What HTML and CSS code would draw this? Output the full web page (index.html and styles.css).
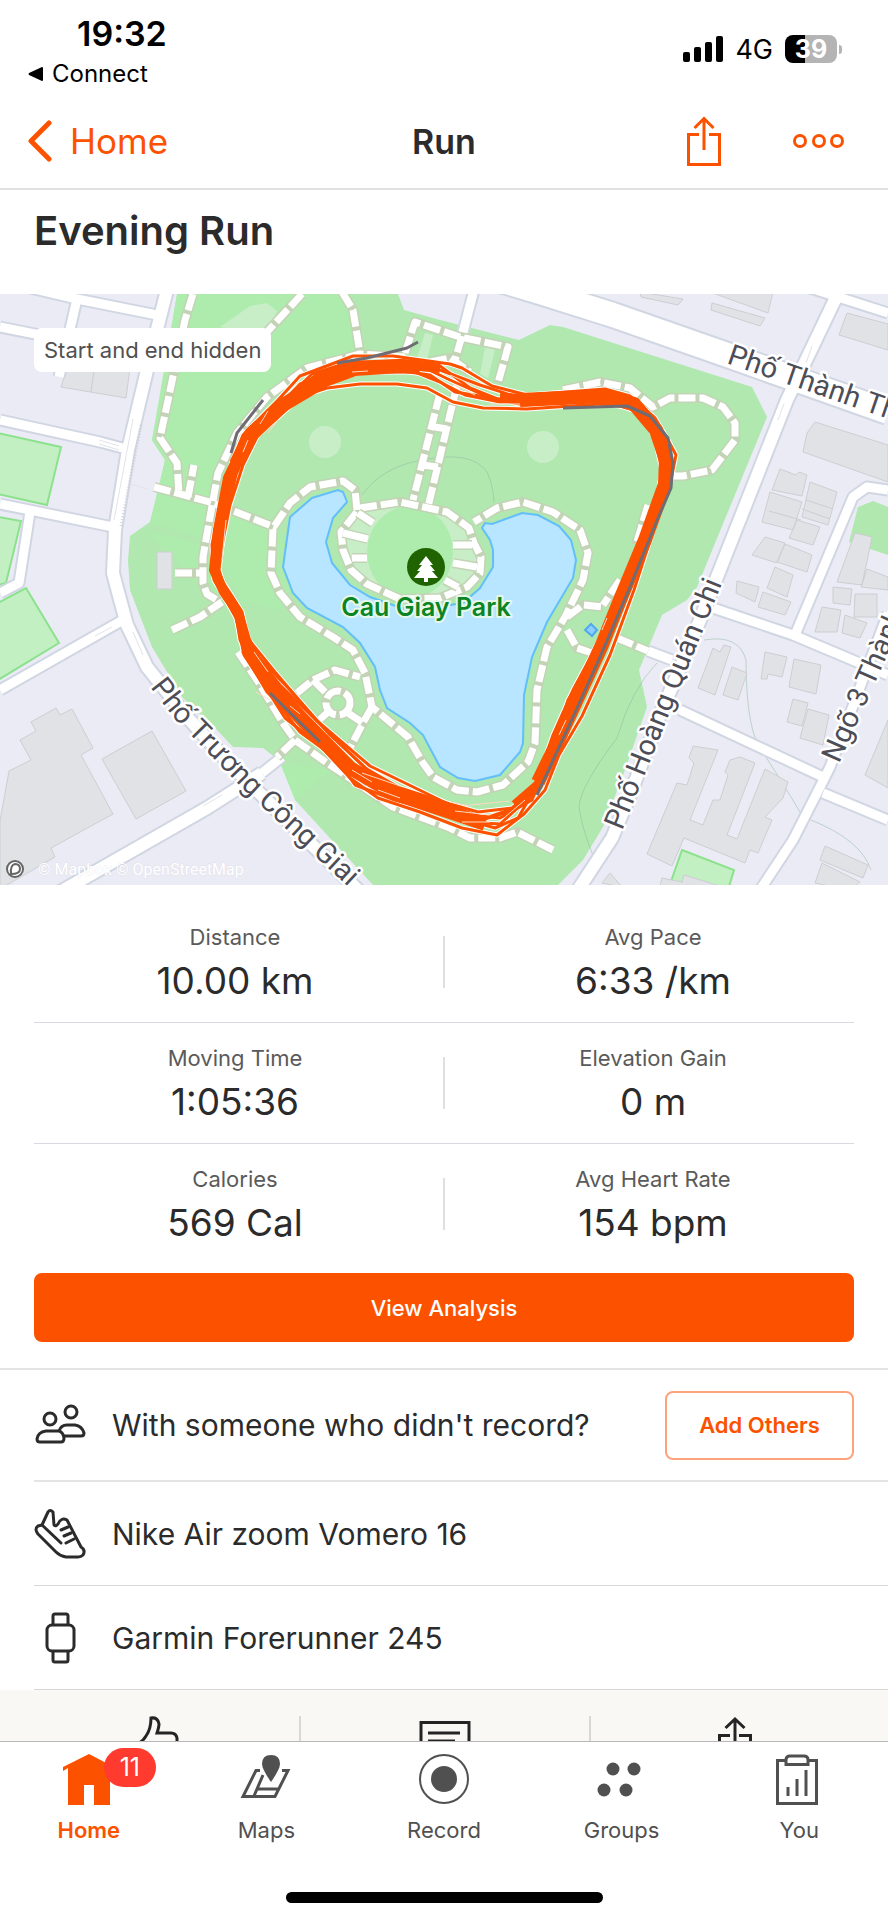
FILE: index.html
```html
<!DOCTYPE html>
<html lang="en">
<head>
    <meta charset="UTF-8">
    <meta name="viewport" content="width=device-width, initial-scale=1.0">
    <title>Evening Run</title>
    <link rel="stylesheet" href="styles.css">
</head>
<body>
    <div class="status-bar">
        <div class="status-left">
            <span class="clock">19:32</span>
            <a href="#" class="back-app">
                <svg width="16" height="16" viewBox="0 0 16 16"><path d="M1 7 14 1q1 0 1 1v12q0 1-1 1L1 9q-1-1 0-2z"/></svg>
                Connect
            </a>
        </div>
        <div class="status-right">
            <svg width="40" height="26" viewBox="0 0 40 26">
                <rect x="0" y="16" width="7" height="10" rx="2"/>
                <rect x="11" y="11" width="7" height="15" rx="2"/>
                <rect x="22" y="6" width="7" height="20" rx="2"/>
                <rect x="33" y="0" width="7" height="26" rx="2"/>
            </svg>
            <span class="network">4G</span>
            <span class="battery">39</span>
        </div>
    </div>

    <header class="nav">
        <a href="#" class="nav-back">
            <svg width="24" height="42" viewBox="0 0 24 42"><path d="M21 3 3 21l18 18" fill="none" stroke="currentColor" stroke-width="5" stroke-linecap="round" stroke-linejoin="round"/></svg>
            Home
        </a>
        <span class="nav-title">Run</span>
        <div class="nav-actions">
            <button class="icon-btn" aria-label="Share">
                <svg width="34" height="52" viewBox="0 0 34 52" fill="none" stroke="currentColor" stroke-width="3">
                    <path d="M12 19.500H1.500v30h31v-30H22M17 35V3M7.500 13 17 3.500 26.500 13"/>
                </svg>
            </button>
            <button class="icon-btn" aria-label="More">
                <svg width="52" height="14" viewBox="0 0 52 14" fill="none" stroke="currentColor" stroke-width="3">
                    <circle cx="7" cy="7" r="5.500"/><circle cx="26" cy="7" r="5.500"/><circle cx="44" cy="7" r="5.500"/>
                </svg>
            </button>
        </div>
    </header>

    <main class="content">
        <h1>Evening Run</h1>

        <div class="map">
            <svg class="map-svg" viewBox="0 294 888 591">
                <defs>
                    <g id="roads-lg">
                        <path d="M440 262 540 292 613 315 733 357 888 412"/>
                    </g>
                    <g id="roads-md">
                        <path d="M167 290 153 345 128 450 115 530 113 573 118 592 127 625 147 667 187 717 233 767 300 833 363 895"/>
                        <path d="M842 285 787 400 717 577 690 645 660 715 630 795 612 838 578 890"/>
                        <path d="M60 892 207 808 262 773"/>
                    </g>
                    <g id="roads-sm">
                        <path d="M0 327 150 357M30 288 77 299 157 315M77 299 59 377M0 420 100 442 130 450M0 504 113 527M30 512 19 583 0 593M0 690 123 620"/>
                        <path d="M807 287 888 313M680 710 823 777M823 793 888 820M713 608 793 635 888 675M888 490 867 487 853 497 795 635"/>
                        <path d="M888 613 830 767 820 787 793 840 760 890M474 290 462 336M648 651 672 660M262 773 282 757"/>
                    </g>
                    <g id="walks">
                        <path d="M405 357 360 354 307 368 267 397 237 433 218 473 210 517 203 557 203 583 207 594 220 602"/>
                        <path d="M238 652 257 680 283 723 295 740 327 763 357 783 393 807 450 828 470 838 500 838 517 832 553 850"/>
                        <path d="M430 362 450 358 470 372M563 390 600 382 630 388 653 407 670 398 703 398 723 407 735 423 735 440 712 470 683 476 668 476M648 505 636 545M620 580 603 605"/>
                        <path d="M193 294 185 320 160 438 177 463 179 495M154 487 213 503 277 528M188 497 194 465"/>
                        <path d="M302 294 267 332M342 292 353 310 360 353M405 353 415 322 460 337 508 347 498 383M462 336 455 360"/>
                        <path d="M440 393 413 500M457 385 428 507M435 427 447 429M422 465 438 467"/>
                        <path d="M357 510 355 490 343 481 310 487 290 503 273 528 271 573 280 593 300 617 333 637 353 650 365 673 372 707 408 737 423 763 433 777 457 790 477 792 503 785 528 762 535 743 537 690 547 647 565 617 583 580 588 553 580 530 553 512 523 502 497 508 474 522"/>
                        <path d="M360 508 400 502 447 512 469 528 474 543 481 557 480 573 467 587 440 598 400 599 367 584 351 570 343 550 341 532z"/>
                        <path d="M567 617 583 605 603 607M567 630 577 648 592 653M617 638 648 651M172 630 200 617 222 602M175 573 202 573M295 740 277 757"/>
                        <path d="M297 693 313 680 335 670 360 677M313 680 328 695M327 713 317 722M348 713 363 723 350 748M372 707 363 723"/>
                        <circle cx="338" cy="703" r="12"/>
                    </g>
                    <g id="spokes">
                        <path d="M358 513 373 523M343 533 368 539M352 558 367 558M453 545 472 545M453 563 477 567M445 580 458 587"/>
                    </g>
                    <g id="laps">
                        <path d="M300 376 353 356 393 356 450 364 462 368 492 386 527 395 605 389 630 396 655 418 668 440 676 455 671 480 655 525 634 590 610 655 582 716 559 755 545 790 524 814 497 835 462 828 420 812 378 798 350 778 310 735 267 692 243 650 236 618 226 600 214 580 212 545 221 500 232 462 243 435 278 400z"/>
                        <path d="M305 384 345 366 383 364 425 368 450 380 490 398 527 402 605 397 628 400 648 420 660 440 666 462 664 485 648 525 625 588 600 640 573 690 553 735 534 790 512 808 478 812 450 804 400 788 365 768 318 722 280 685 250 648 242 612 232 596 216 572 218 540 228 495 242 455 262 425z"/>
                        <path d="M302 396 327 388 360 384 397 384 427 388 453 402 483 408 527 409 600 404 640 408 654 435 662 470 657 500 634 560 616 610 594 650 564 722 537 786 508 812 475 822 440 812 395 800 355 785 335 757 285 718 264 685 240 640 236 614 222 594 217 575 222 545 230 505 243 465 258 435z"/>
                        <path d="M312 374 350 362 400 362 440 366 470 388 500 400 540 396 600 392 636 402 662 432 670 460 666 492 643 550 615 612 600 645 568 700 555 742 540 780 518 818 495 828 450 815 410 795 370 772 330 735 290 690 252 650 241 625 232 600 219 585 213 555 224 505 236 460 254 424 278 406z"/>
                        <path d="M320 380 365 372 415 372 440 382 465 395 500 402 570 400 622 402 646 420 660 450 664 480 650 520 625 585 609 625 593 665 560 728 547 765 532 800 500 818 470 815 440 800 370 766 316 720 275 672 249 640 240 610 226 592 219 570 225 520 236 475 252 438 280 408z"/>
                        <path d="M300 384 350 369 395 370 430 375 455 392 480 396 525 405 600 400 640 412 657 438 665 475 652 515 629 575 605 630 588 680 562 735 542 780 520 806 480 820 440 812 386 796 345 765 300 732 267 690 244 655 239 620 226 600 213 570 220 510 234 468 250 440 275 410z"/>
                        <path d="M352 366 400 365 440 370 480 385 520 398 600 393 634 402 660 435 668 470 657 510 629 580 603 640 573 705 552 745 532 795 500 824 465 822 430 810 390 792 350 768 305 722 265 682 247 645 238 610"/>
                    </g>
                </defs>

                <rect class="land" y="294" width="888" height="591"/>

                <!-- pitches and parks -->
                <path class="pitch" d="M-2 433 61 447 47 505-2 494zM-2 517 21 521 6 583-2 585zM-2 603 26 588 59 643-2 680z"/>
                <path class="pitch" d="M682 850 734 870 728 890 668 890z"/>
                <path class="park" d="M177 294 160 400 152 440 165 460 157 500 150 522 130 536 128 560 130 590 152 647 182 697 217 730 233 747 263 748 272 755 280 763 295 777 295 800 373 885H558L583 860 603 827 625 770 647 707 639 670 662 615 687 600 697 587 767 417 752 387 563 327 550 325 519 340 440 320 404 310 398 294zM858 507 873 501 888 507V555L849 542z"/>
                <path class="park-light" d="M177 294H350L362 352 300 370 240 430 212 505 205 540 150 522 165 460 152 440zM205 545 230 600 215 600 145 530zM280 763 330 770 295 800zM345 590 300 570 280 610 240 600 222 560 230 510 275 530z"/>
                <path class="lawn" d="M220 327 250 306 267 303 277 311 267 335zM425 333 433 335 427 360 417 358zM485 347 495 350 488 378 480 374z"/>
                <circle class="lawn" cx="325" cy="442" r="16"/>
                <circle class="lawn" cx="543" cy="447" r="16"/>
                <path class="contour" d="M362 495q20-28 60-35 50-10 65 12 6 12 7 30M657 663q-25 25-40 75-38 50-38 70 5 30 20 60M704 640q35-6 42 20 0 60 12 85 20 30 42 67M811 820q50 20 60 50"/>

                <!-- lake -->
                <path class="lake" d="M290 517 312 498 338 490 343 492 347 502 333 518 326 542 332 563 350 585 370 597 410 611 463 603 480 588 493 567 493 550 490 540 482 528 485 523 492 524 522 513 538 515 559 526 571 540 576 560 573 578 547 622 532 657 524 695 523 743 520 752 500 775 475 781 458 778 440 767 423 735 410 723 387 708 380 690 375 667 360 643 343 627 307 608 293 593 283 567z"/>
                <path class="pond" d="M591 624 597 630 592 636 585 630z"/>
                <path class="lawn" d="M360 508 400 502 447 512 469 528 481 557 480 573 467 587 440 598 400 599 367 584 351 570 341 532z"/>
                <ellipse class="park-light-fill" cx="410" cy="552" rx="43" ry="46"/>

                <!-- buildings -->
                <g class="building">
                    <path d="M67 368 61 387 126 398 130 368zM94 370 91 392M9 771 31 760 20 740 36 731 31 722 56 708 60 715 72 709 93 748 81 755 113 814 51 848 55 857 0 889V821zM102 759 152 731 186 791 136 819zM157 552h15v37h-15z"/>
                    <path d="M640 292 683 299 678 305 641 297zM712 303 765 318 760 326 711 310zM710 292H773L768 313zM847 313 888 324V350L839 335zM815 422 888 445V482L803 452 807 433zM780 469 796 475 799 472 807 475 802 496 772 490zM770 492 802 502 793 530 762 522zM765 537 785 543 777 563 752 555zM810 482 837 492 828 525 802 517zM797 520 820 527 813 545 789 538zM785 544 812 555 807 572 777 562zM775 567 793 575 787 597 767 588z"/>
                    <path d="M737 581 759 587 755 602 736 593zM763 592 791 602 785 615 758 607zM833 587 852 589 850 605 833 603zM855 594H877V617H854zM822 607 841 610 837 632 815 632zM845 615 867 623 860 638 842 633zM855 533 872 537 862 585 837 582zM867 569 888 577V590L861 587z"/>
                    <path d="M713 648 720 652 724 645 731 647 715 695 698 688zM732 667 747 673 738 700 723 695zM765 652 787 657 782 677 768 674 767 679 761 679zM794 659 821 665 816 694 789 687zM793 699 808 703 802 726 787 722zM808 709 829 715 823 745 800 738z"/>
                    <path d="M693 746 718 750 690 820 703 825 713 800 720 800 728 775 725 772 730 760 740 757 755 763 727 835 737 839 765 769 788 782 783 798 765 817 772 820 758 853 750 850 745 863 684 838 672 866 647 854 677 783 687 785 694 763 689 758zM888 720 865 775 888 788zM825 846 868 865 863 878 820 860zM822 863 860 882 850 890 815 883zM602 883 610 873 622 887zM662 878 682 882 684 875 720 886H660z"/>
                    <path d="M769 511 801 520M806 500 833 509M802 509 830 519"/>
                </g>

                <!-- roads -->
                <use class="casing-sm" href="#roads-sm"/>
                <use class="casing-md" href="#roads-md"/>
                <use class="casing-lg" href="#roads-lg"/>
                <use class="road-sm" href="#roads-sm"/>
                <use class="road-md" href="#roads-md"/>
                <use class="road-lg" href="#roads-lg"/>
                <path class="steps" d="M141 425 121 526"/>
                <path class="road-mark" d="M133 419 114 520M99 440 119 446M99 444 119 450M130 484 148 489M95 636 112 627M133 632 143 655M203 806 222 795M806 363 812 346M778 420 784 404"/>

                <!-- foot paths -->
                <use class="walk-casing" href="#walks"/>
                <use class="walk" href="#walks"/>
                <use class="spoke-casing" href="#spokes"/>
                <use class="spoke" href="#spokes"/>

                <!-- route -->
                <use class="lap-casing" href="#laps"/>
                <use class="lap" href="#laps"/>
                <path class="lap-core" d="M283 404 318 378 350 366 400 364 440 368M500 398 540 399 605 396 640 408 658 432 667 460 666 482 645 540 620 600 602 645 578 697 556 745 538 785 515 805M440 808 393 793 350 767 300 718 262 675 246 640 238 612 224 592 214 570 218 530 228 478 250 432 283 404"/>
                <path class="lap-thick" d="M236 464 250 436 283 405 325 380 355 369 400 366 420 367M520 400 605 396 634 404 656 430 666 460 665 484 645 540 620 600 602 645 578 697 556 745 538 782M247 648 268 682 302 719 350 768 393 793 450 812 485 824"/>
                <path class="lap-gap" d="M268 411 260 424M278 420 268 433M248 440 243 452M254 652 268 672M256 692 270 700M290 706 300 714M352 770 372 782M362 773 400 786M378 790 400 798M455 811 490 815M470 805 510 801M450 802 470 806M505 817 525 800M462 822 490 822M222 560 226 520M559 735 566 720M602 630 607 618M352 372 368 371M450 375 480 388M452 384 475 395M490 404 520 404"/>
                <path class="lap-hidden" d="M418 342 407 348 367 358 337 363M263 400 237 433 231 453M270 693 320 742M563 408 627 406 650 416 668 438 673 463 671 488 658 518 630 587 600 657 573 717 537 795"/>

                <!-- labels -->
                <path id="label-truong" d="M150 687 175 719 245 791 370 907" fill="none"/>
                <text class="street"><textPath href="#label-truong">Phố Trương Công Giai</textPath></text>
                <text class="street" transform="translate(726 363) rotate(19)">Phố Thành Thái</text>
                <text class="street" transform="translate(622 831) rotate(-68)">Phố Hoàng Quán Chi</text>
                <text class="street" transform="translate(839 764) rotate(-66)">Ngõ 3 Thành Thái</text>
                <circle cx="426" cy="567" r="19" fill="#1f6400"/>
                <path d="M426 556 433 565H430L435 571H432L438 578H428V582H424V578H414L420 571H417L422 565H419z" fill="#fff"/>
                <text class="park-name" x="426" y="616">Cau Giay Park</text>
                <g class="mapbox-mark">
                    <circle cx="15" cy="869" r="8"/>
                    <path d="M11 874q-1-9 4-10 5 0 5 5 0 5-9 5z"/>
                </g>
                <text class="credit" x="38" y="875">© Mapbox © OpenStreetMap</text>
            </svg>
            <span class="map-chip">Start and end hidden</span>
        </div>

        <section class="stats">
            <div class="stat-row">
                <div class="stat"><span class="stat-label">Distance</span><span class="stat-value">10.00 km</span></div>
                <div class="stat"><span class="stat-label">Avg Pace</span><span class="stat-value">6:33 /km</span></div>
            </div>
            <div class="stat-row">
                <div class="stat"><span class="stat-label">Moving Time</span><span class="stat-value">1:05:36</span></div>
                <div class="stat"><span class="stat-label">Elevation Gain</span><span class="stat-value">0 m</span></div>
            </div>
            <div class="stat-row">
                <div class="stat"><span class="stat-label">Calories</span><span class="stat-value">569 Cal</span></div>
                <div class="stat"><span class="stat-label">Avg Heart Rate</span><span class="stat-value">154 bpm</span></div>
            </div>
            <button class="analysis-btn">View Analysis</button>
        </section>

        <ul class="details">
            <li class="detail detail-tall">
                <svg width="52" height="52" viewBox="0 0 52 52" fill="none" stroke="currentColor" stroke-width="3" stroke-linejoin="round">
                    <circle cx="16" cy="20" r="6"/>
                    <circle cx="37" cy="13" r="6"/>
                    <path d="M12 32H25Q29 33 30 39 30 43 27 43H6Q3 43 3 40 4 33 12 32z"/>
                    <path d="M25 32Q27 26 33 26H41Q48 27 50 34 50 37 47 37H29"/>
                </svg>
                <span class="detail-text">With someone who didn't record?</span>
                <button class="add-btn">Add Others</button>
            </li>
            <li class="detail">
                <svg width="52" height="52" viewBox="0 0 52 52" fill="none" stroke="currentColor" stroke-width="3" stroke-linecap="round" stroke-linejoin="round">
                    <path d="M8 17 14 4Q16 1 19 4L20 17Q22 19 24 16 27 9 33 12L47 39Q52 42 49 47 47 49 44 49H32Q26 48 22 44L4 26Q0 21 4 18z"/>
                    <path d="M8 17 27 35M27 22 34 19M30 28 37 25M32 35 40 31"/>
                </svg>
                <span class="detail-text">Nike Air zoom Vomero 16</span>
            </li>
            <li class="detail">
                <svg width="52" height="52" viewBox="0 0 52 52" fill="none" stroke="currentColor" stroke-width="3">
                    <rect x="13" y="13" width="27" height="26" rx="5"/>
                    <path d="M19 13V4q0-2 2-2h11q2 0 2 2v9M19 39v9q0 2 2 2h11q2 0 2-2v-9"/>
                </svg>
                <span class="detail-text">Garmin Forerunner 245</span>
            </li>
        </ul>

        <div class="social">
            <button class="social-btn" aria-label="Give kudos">
                <svg width="52" height="52" viewBox="0 0 52 52" fill="none" stroke="currentColor" stroke-width="3">
                    <path d="M2 27H10Q14 25 17 20 22 13 22 2 29 1 30 8 30 11 28 17H42Q47 17 48 22V34Q48 46 36 46H20Q14 46 10 43H2z"/>
                </svg>
            </button>
            <button class="social-btn" aria-label="Comments">
                <svg width="52" height="52" viewBox="0 0 52 52" fill="none" stroke="currentColor" stroke-width="3">
                    <path d="M2 6.500H50V42H30L18 51V42H2zM9 17H41M9 25H36"/>
                </svg>
            </button>
            <button class="social-btn" aria-label="Share activity">
                <svg width="52" height="52" viewBox="0 0 52 52" fill="none" stroke="currentColor" stroke-width="3">
                    <path d="M22 19.500H11.500v30h31v-30H31M27 35V3M17.500 12 27 3 36.500 12"/>
                </svg>
            </button>
        </div>
    </main>

    <footer class="tab-bar">
        <nav class="tabs">
            <a href="#" class="tab active">
                <svg width="52" height="51" viewBox="0 0 52 51" fill="currentColor"><path d="M26 0 51 13V17L47 15V51H31V31H21V51H5V14L0 17V13z"/></svg>
                <span>Home</span>
                <span class="badge">11</span>
            </a>
            <a href="#" class="tab">
                <svg width="52" height="51" viewBox="0 0 52 51" fill="none" stroke="currentColor" stroke-width="3">
                    <path d="M20 16.500H16L3 42.500H35L48 16.500H42M23 21 14 42M18 35H38"/>
                    <path d="M31 1q9 0 9 9 0 5-9 18Q22 15 22 10q0-9 9-9z" fill="currentColor" stroke="none"/>
                </svg>
                <span>Maps</span>
            </a>
            <a href="#" class="tab">
                <svg width="52" height="51" viewBox="0 0 52 51" fill="none" stroke="currentColor" stroke-width="2">
                    <circle cx="26" cy="25" r="24"/>
                    <circle cx="26" cy="25" r="13" fill="currentColor" stroke="none"/>
                </svg>
                <span>Record</span>
            </a>
            <a href="#" class="tab">
                <svg width="52" height="51" viewBox="0 0 52 51" fill="currentColor">
                    <circle cx="17" cy="15" r="6.500"/><circle cx="38" cy="15" r="6.500"/>
                    <circle cx="8" cy="36" r="6.500"/><circle cx="30" cy="36" r="6.500"/>
                </svg>
                <span>Groups</span>
            </a>
            <a href="#" class="tab">
                <svg width="52" height="51" viewBox="0 0 52 51" fill="none" stroke="currentColor" stroke-width="3">
                    <path d="M12 6.500H4.500v43h39v-43H36M13 10.500V6q0-4 4-4h14q4 0 4 4v4.500zM15 33v9M24 25v17M33 16v26"/>
                </svg>
                <span>You</span>
            </a>
        </nav>
        <div class="home-indicator"></div>
    </footer>
</body>
</html>
```
FILE: styles.css
```css
* {
    box-sizing: border-box;
}
body {
    margin: 0;
    height: 100vh;
    display: flex;
    flex-direction: column;
    background: #fff;
    color: #2b2b2b;
    font-family: Inter, "Liberation Sans", sans-serif;
}
a {
    color: inherit;
    text-decoration: none;
}
button {
    font-family: inherit;
    cursor: pointer;
}
svg {
    display: block;
    flex-shrink: 0;
}

/* status bar */
.status-bar {
    display: flex;
    justify-content: space-between;
    padding: 14px 46px 0 28px;
    color: #000;
}
.status-left {
    display: flex;
    flex-direction: column;
    line-height: 40px;
}
.clock {
    padding-left: 49px;
    font-size: 34px;
    font-weight: 600;
}
.back-app {
    display: flex;
    align-items: center;
    gap: 8px;
    font-size: 24px;
}
.status-right {
    display: flex;
    align-items: center;
    gap: 12px;
    height: 70px;
}
.network {
    font-size: 27px;
}
.battery {
    position: relative;
    width: 52px;
    margin-right: 5px;
    border-radius: 8px;
    background: linear-gradient(to right, #000 39%, #b4b4b4 39%);
    color: #fff;
    font-size: 25px;
    font-weight: 700;
    line-height: 28px;
    text-align: center;
}
.battery::after {
    content: "";
    position: absolute;
    left: 54px;
    top: 10px;
    width: 3px;
    height: 9px;
    border-radius: 0 4px 4px 0;
    background: #b4b4b4;
}

/* navigation */
.nav {
    display: grid;
    grid-template-columns: 1fr auto 1fr;
    align-items: center;
    height: 96px;
    border-bottom: 2px solid #e1e1e1;
    font-size: 34px;
}
.nav-back {
    display: flex;
    align-items: center;
    gap: 18px;
    padding-left: 28px;
    color: #fc5200;
    font-size: 35px;
}
.nav-title {
    font-weight: 600;
}
.nav-actions {
    display: flex;
    align-items: center;
    justify-content: flex-end;
    gap: 72px;
    padding-right: 43px;
}
.icon-btn {
    padding: 0;
    border: none;
    background: none;
    color: #fc5200;
}

.content {
    flex: 1;
    min-height: 0;
    overflow-y: auto;
    scrollbar-width: none;
}
h1 {
    margin: 0;
    padding: 16px 34px 38px;
    font-size: 40px;
    font-weight: 600;
    line-height: 50px;
}

/* map */
.map {
    position: relative;
}
.map-svg {
    width: 100%;
    height: auto;
}
.map-chip {
    position: absolute;
    left: 34px;
    top: 34px;
    padding: 0 10px;
    border-radius: 8px;
    background: #fff;
    color: #505050;
    font-size: 22px;
    line-height: 44px;
}
.land { fill: #ebebf5; }
.park { fill: #b0e8b0; }
.park-light, .park-light-fill { fill: #adecad; }
.lawn { fill: #c8eec8; }
.pitch {
    fill: #c2f0c2;
    stroke: #8ce28c;
    stroke-width: 2;
}
.contour {
    fill: none;
    stroke: #8fb8a0;
    stroke-opacity: .5;
}
.lake {
    fill: #b8e5ff;
    stroke: #62bffa;
    stroke-width: 2;
}
.pond {
    fill: #8fcdff;
    stroke: #4fa9f0;
    stroke-width: 2;
}
.building {
    fill: #e1e2e6;
    stroke: #cdcdd2;
}
.casing-sm, .casing-md, .casing-lg,
.road-sm, .road-md, .road-lg {
    fill: none;
    stroke-linejoin: round;
}
.casing-sm, .casing-md, .casing-lg { stroke: #d0d6e2; }
.road-sm, .road-md, .road-lg { stroke: #fff; }
.casing-sm { stroke-width: 13; }
.casing-md { stroke-width: 16; }
.casing-lg { stroke-width: 28; }
.road-sm { stroke-width: 9; }
.road-md { stroke-width: 12; }
.road-lg { stroke-width: 24; }
.steps {
    stroke: #d0d0dc;
    stroke-width: 3;
    stroke-dasharray: 1 2;
}
.road-mark {
    fill: none;
    stroke: #e2e3ea;
    stroke-width: 1;
}
.walk-casing, .walk, .spoke-casing, .spoke {
    fill: none;
    stroke-linejoin: round;
}
.walk-casing, .spoke-casing {
    stroke: #c3d3b5;
    stroke-width: 10;
}
.walk, .spoke {
    stroke: #fff;
    stroke-width: 7;
}
.walk {
    stroke-dasharray: 17 4;
}
.lap-casing, .lap, .lap-core, .lap-thick, .lap-gap, .lap-hidden {
    fill: none;
    stroke-linejoin: round;
}
.lap-casing {
    stroke: #fff;
    stroke-width: 5;
}
.lap {
    stroke: #fc5200;
    stroke-width: 3;
}
.lap-core {
    stroke: #fc5200;
    stroke-width: 10;
}
.lap-thick {
    stroke: #fc5200;
    stroke-width: 14;
}
.lap-gap {
    stroke: #ffd9c2;
    stroke-width: 1;
}
.lap-hidden {
    stroke: #6f6c74;
    stroke-width: 3;
}
.street {
    font-family: Roboto, "Noto Sans", sans-serif;
    font-size: 29px;
    fill: #4d4d57;
    stroke: #fff;
    stroke-width: 5px;
    stroke-linejoin: round;
    paint-order: stroke;
}
.park-name {
    font-size: 25px;
    font-weight: 600;
    text-anchor: middle;
    fill: #0b8424;
    stroke: #e6f8ea;
    stroke-width: 4px;
    stroke-linejoin: round;
    paint-order: stroke;
}
.mapbox-mark {
    fill: #fff;
    stroke: #666;
    stroke-width: 2;
}
.credit {
    font-family: Roboto, sans-serif;
    font-size: 16px;
    fill: #fff;
    stroke: #c8c8d0;
    stroke-opacity: .3;
    paint-order: stroke;
}

/* stats */
.stats {
    padding: 17px 34px 26px;
    border-bottom: 2px solid #e4e4e4;
}
.stat-row {
    position: relative;
    display: grid;
    grid-template-columns: 1fr 1fr;
    gap: 16px;
    padding: 20px 0 21px;
    border-bottom: 1px solid #d8d9e2;
}
.stat-row:nth-child(3) {
    border-bottom: none;
}
.stat-row::after {
    content: "";
    position: absolute;
    left: calc(50% - 1px);
    top: 34px;
    width: 2px;
    height: 52px;
    background: #dedfe3;
}
.stat {
    display: flex;
    flex-direction: column;
    align-items: center;
    gap: 9px;
}
.stat-label {
    color: #5a5a5a;
    font-size: 22px;
    line-height: 30px;
}
.stat-value {
    font-size: 37px;
    line-height: 40px;
}
.analysis-btn {
    display: block;
    width: 100%;
    height: 69px;
    margin-top: 9px;
    border: none;
    border-radius: 8px;
    background: #fc5200;
    color: #fff;
    font-size: 22px;
    font-weight: 500;
}

/* details */
.details {
    margin: 0;
    padding: 0 0 0 34px;
    list-style: none;
}
.detail {
    display: flex;
    align-items: center;
    gap: 26px;
    height: 104px;
    padding-right: 34px;
    border-bottom: 1px solid #d8d8d8;
}
.detail-tall {
    height: 112px;
    border-bottom: 2px solid #e4e4e4;
}
.detail-text {
    flex: 1;
    font-size: 30px;
}
.add-btn {
    width: 189px;
    height: 69px;
    padding: 0;
    border: 2px solid #fda27a;
    border-radius: 8px;
    background: #fff;
    color: #fc5200;
    font-size: 22px;
    font-weight: 600;
}

.social {
    display: grid;
    grid-template-columns: repeat(3, 1fr);
    padding: 26px 10px;
    background: #f9f8f4;
}
.social-btn {
    display: flex;
    justify-content: center;
    padding: 0;
    border: none;
    background: none;
    color: #242424;
}
.social-btn + .social-btn {
    border-left: 2px solid #d9d8d5;
}

/* tab bar */
.tab-bar {
    border-top: 1px solid #b8b8b8;
    background: #fff;
}
.tabs {
    display: grid;
    grid-template-columns: repeat(5, 1fr);
    padding-top: 12px;
}
.tab {
    position: relative;
    display: flex;
    flex-direction: column;
    align-items: center;
    gap: 10px;
    color: #505050;
    font-size: 22px;
    line-height: 30px;
}
.tab.active {
    color: #fc5200;
    font-weight: 600;
}
.badge {
    position: absolute;
    left: calc(50% + 15px);
    top: -6px;
    width: 52px;
    border-radius: 20px;
    background: #ff3b30;
    color: #fff;
    font-size: 25px;
    font-weight: 400;
    line-height: 39px;
    text-align: center;
}
.home-indicator {
    width: 317px;
    height: 11px;
    margin: 47px auto 17px;
    border-radius: 6px;
    background: #000;
}
```
